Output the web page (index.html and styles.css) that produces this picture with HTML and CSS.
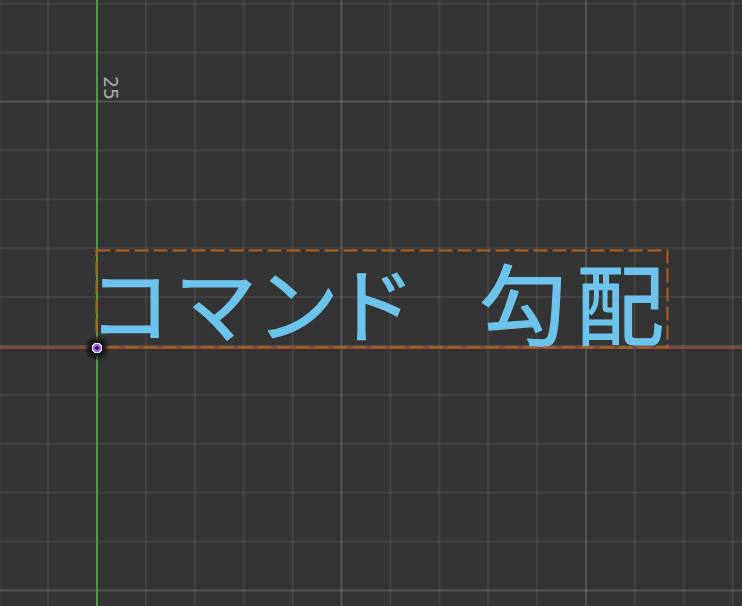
FILE: index.html
```html
<!DOCTYPE html>
<html lang="ja">
<head>
<meta charset="utf-8">
<title>Viewport</title>
<link rel="stylesheet" href="styles.css">
</head>
<body>
<div class="viewport">
  <div class="grid grid-minor"></div>
  <div class="grid grid-major"></div>
  <div class="axis axis-x"></div>
  <div class="axis axis-y"></div>
  <div class="label-25">25</div>
  <svg class="overlay" width="742" height="606" viewBox="0 0 742 606">
    <text class="txt kata" x="93" y="336">コマンド</text>
    <text class="txt kanji" x="479" y="338">勾</text>
    <text class="txt kanji" x="576" y="338">配</text>
    <rect class="bounds" x="96.5" y="250.5" width="571" height="97"></rect>
  </svg>
  <div class="origin"></div>
</div>
</body>
</html>
```
FILE: styles.css
```css
html, body {
  margin: 0;
  padding: 0;
  background: #343434;
}
.viewport {
  position: relative;
  width: 742px;
  height: 606px;
  overflow: hidden;
  background: #343434;
}
.grid {
  position: absolute;
  inset: 0;
}
.grid-minor {
  background-image:
    linear-gradient(90deg, rgba(255,255,255,0.065) 2px, transparent 2px),
    linear-gradient(0deg, rgba(255,255,255,0.065) 2px, transparent 2px);
  background-size: 48.9px 48.9px;
  background-position: 96px 347px;
}
.grid-major {
  background-image:
    linear-gradient(90deg, rgba(255,255,255,0.09) 2px, transparent 2px),
    linear-gradient(0deg, rgba(255,255,255,0.09) 2px, transparent 2px);
  background-size: 244.5px 244.5px;
  background-position: 96px 347px;
}
.axis {
  position: absolute;
}
.axis-x {
  left: 0;
  right: 0;
  top: 347px;
  height: 2px;
  background: #96403a;
}
.axis-y {
  top: 0;
  bottom: 0;
  left: 96px;
  width: 2px;
  background: #4f9c42;
}
.label-25 {
  position: absolute;
  left: 101px;
  top: 77px;
  font-family: "DejaVu Sans", sans-serif;
  font-size: 19px;
  line-height: 19px;
  color: #a8a8a8;
  transform: rotate(90deg);
  transform-origin: 10px 9px;
}
.overlay {
  position: absolute;
  left: 0;
  top: 0;
}
.txt {
  font-family: "Noto Sans CJK JP", sans-serif;
  font-weight: 400;
  fill: #6cc3ec;
  stroke: #6cc3ec;
  stroke-width: 1.2px;
  stroke-linejoin: round;
}
.kata {
  font-size: 82px;
  font-feature-settings: "palt";
  letter-spacing: 8.5px;
}
.kanji {
  font-size: 88px;
}
.bounds {
  fill: none;
  stroke: #b25f1f;
  stroke-width: 2;
  stroke-dasharray: 14 5;
}
.origin {
  position: absolute;
  left: 84px;
  top: 335px;
  width: 26px;
  height: 26px;
  border-radius: 50%;
  background: radial-gradient(circle, #3c1860 0 2px, #9a66dc 2px 4px, #e6dcf2 4px 5.5px, rgba(18,18,18,0.85) 5.5px 7.5px, rgba(18,18,18,0.5) 10px, rgba(18,18,18,0) 13px);
}
```
